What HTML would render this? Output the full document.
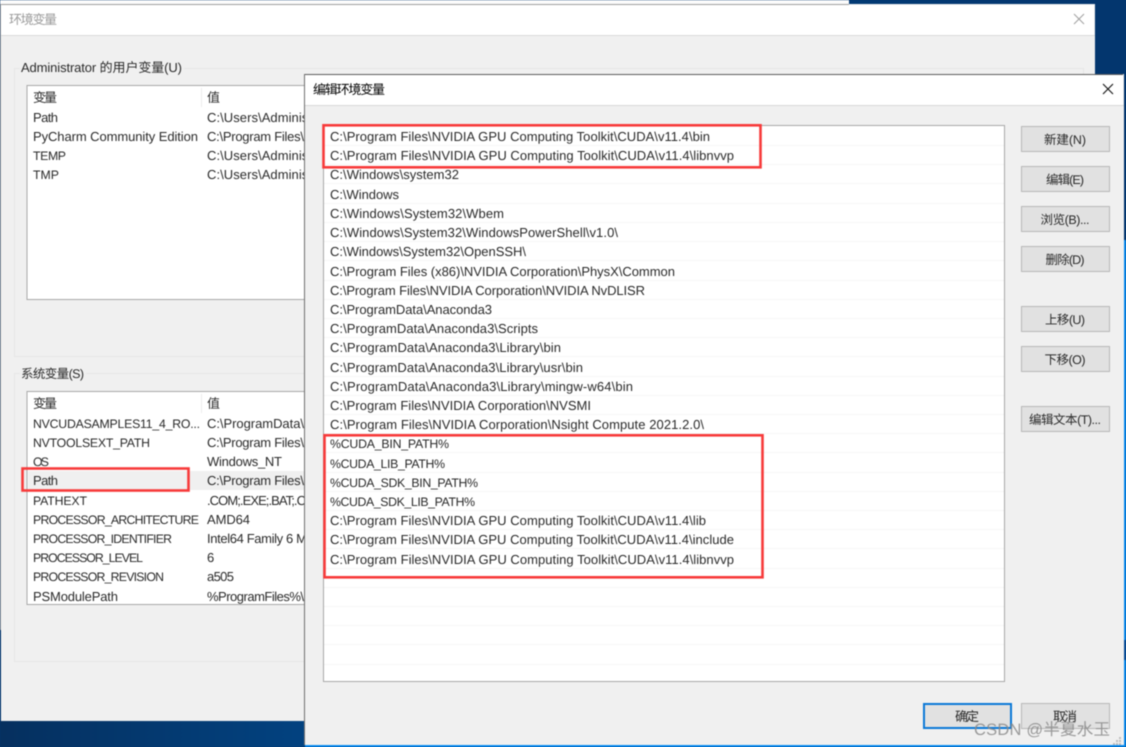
<!DOCTYPE html>
<html><head><meta charset="utf-8"><style>
html,body{margin:0;padding:0;width:1126px;height:747px;overflow:hidden;background:#04386f}
svg{display:block;position:absolute;left:0;top:0;filter:blur(.4px)}
text{font-family:"Liberation Sans","Noto Sans CJK SC",sans-serif;font-size:13px;fill:#2a2a2a;text-rendering:geometricPrecision}
.c{text-anchor:middle}
.u{font-size:12.300px}
.b{font-size:12.500px}
</style></head><body>
<svg width="1126" height="747" viewBox="0 0 1126 747" xmlns="http://www.w3.org/2000/svg">
<defs><linearGradient id="bg" x1="0" x2="1" y1="0" y2="0"><stop offset="0" stop-color="#06305f"/><stop offset=".27" stop-color="#024280"/><stop offset="1" stop-color="#03366e"/></linearGradient></defs>
<rect width="1126" height="747" fill="url(#bg)"/>
<rect x="0" y="0" width="849" height="5" fill="#fbfbfb"/>
<!-- back window -->
<rect x="0" y="4" width="1095" height="717" fill="#f0f0f0"/>
<rect x="0" y="4" width="849" height="1" fill="#a0a0a0"/>
<rect x="1" y="5" width="1093" height="30" fill="#fff"/>
<rect x="1" y="35" width="1094" height="1" fill="#dadada"/>
<rect x="0" y="5" width="1" height="625" fill="#a5a5a5"/>
<rect x="0" y="630" width="1" height="91" fill="#0b3a70"/>
<text x="9" y="24" style="fill:#9a9a9a" textLength="48">环境变量</text>
<path d="M1074 14l10 10M1084 14l-10 10" stroke="#a0a0a0" stroke-width="1" fill="none"/>
<!-- groups -->
<rect x="14.500" y="68.500" width="1069" height="288" fill="none" stroke="#e6e6e6"/>
<rect x="14.500" y="373.500" width="1069" height="288" fill="none" stroke="#e6e6e6"/>
<rect x="20" y="60" width="164" height="16" fill="#f0f0f0"/>
<rect x="20" y="366" width="66" height="16" fill="#f0f0f0"/>
<text x="21" y="72" textLength="161">Administrator 的用户变量(U)</text>
<text x="21" y="378" class="b" textLength="63">系统变量(S)</text>
<!-- user list -->
<rect x="27" y="85.500" width="290" height="214" fill="#fff" stroke="#a8a8a8"/>
<rect x="201" y="88" width="1" height="19" fill="#ececec"/>
<text x="33" y="102" textLength="24">变量</text><text x="207" y="102">值</text>
<text x="33" y="122" textLength="25">Path</text><text x="207" y="122" textLength="132">C:\Users\Administrator</text>
<text x="33" y="141" textLength="165">PyCharm Community Edition</text><text x="207" y="141" textLength="97">C:\Program Files\</text>
<text x="33" y="160" class="u" textLength="33">TEMP</text><text x="207" y="160" textLength="132">C:\Users\Administrator</text>
<text x="33" y="179" class="u" textLength="26">TMP</text><text x="207" y="179" textLength="132">C:\Users\Administrator</text>
<!-- system list -->
<rect x="27" y="391.500" width="290" height="213" fill="#fff" stroke="#a8a8a8"/>
<rect x="201" y="394" width="1" height="19" fill="#ececec"/>
<rect x="28" y="471" width="288" height="19" fill="#f0f0f0"/>
<text x="33" y="408" textLength="24">变量</text><text x="207" y="408">值</text>
<text x="33" y="428" class="u" textLength="167">NVCUDASAMPLES11_4_RO...</text><text x="207" y="428" textLength="97">C:\ProgramData\</text>
<text x="33" y="447" class="u" textLength="117">NVTOOLSEXT_PATH</text><text x="207" y="447" textLength="97">C:\Program Files\</text>
<text x="33" y="466" class="u" textLength="16">OS</text><text x="207" y="466" textLength="75">Windows_NT</text>
<text x="33" y="485" textLength="25">Path</text><text x="207" y="485" textLength="97">C:\Program Files\</text>
<text x="33" y="505" class="u" textLength="54">PATHEXT</text><text x="207" y="505" textLength="99">.COM;.EXE;.BAT;.C</text>
<text x="33" y="524" class="u" textLength="166">PROCESSOR_ARCHITECTURE</text><text x="207" y="524" textLength="43">AMD64</text>
<text x="33" y="543" class="u" textLength="139">PROCESSOR_IDENTIFIER</text><text x="207" y="543" textLength="100">Intel64 Family 6 M</text>
<text x="33" y="562" class="u" textLength="110">PROCESSOR_LEVEL</text><text x="207" y="562">6</text>
<text x="33" y="581" class="u" textLength="131">PROCESSOR_REVISION</text><text x="207" y="581" textLength="27">a505</text>
<text x="33" y="601" textLength="85">PSModulePath</text><text x="207" y="601" textLength="97">%ProgramFiles%\</text>
<rect x="22.500" y="468.500" width="166" height="22" fill="none" stroke="#f73a3a" stroke-width="2.600"/>
<!-- front dialog -->
<rect x="1124" y="240" width="2" height="507" fill="#0a8cf0"/>
<rect x="1124" y="640" width="2" height="20" fill="#0a4f9a"/>
<rect x="304" y="74" width="820" height="671" fill="#f0f0f0"/>
<rect x="304" y="74" width="819" height="1" fill="#5c5c5c"/>
<rect x="304" y="74" width="1" height="671" fill="#707070"/>
<rect x="305" y="75" width="818" height="30" fill="#fff"/>
<rect x="305" y="105" width="819" height="1" fill="#d8d8d8"/>
<rect x="305" y="745" width="821" height="2" fill="#0a8cf0"/>
<text x="313" y="94" style="fill:#000" textLength="72">编辑环境变量</text>
<path d="M1103 84l10 10M1113 84l-10 10" stroke="#111" stroke-width="1.100" fill="none"/>
<!-- path list -->
<rect x="323.500" y="125.500" width="681" height="556" fill="#fff" stroke="#a8a8a8"/>
<g fill="#f6f6f6">
<rect x="324" y="145" width="680" height="1"/><rect x="324" y="164" width="680" height="1"/><rect x="324" y="183" width="680" height="1"/><rect x="324" y="203" width="680" height="1"/><rect x="324" y="222" width="680" height="1"/><rect x="324" y="241" width="680" height="1"/><rect x="324" y="260" width="680" height="1"/><rect x="324" y="280" width="680" height="1"/><rect x="324" y="299" width="680" height="1"/><rect x="324" y="318" width="680" height="1"/><rect x="324" y="337" width="680" height="1"/><rect x="324" y="356" width="680" height="1"/><rect x="324" y="376" width="680" height="1"/><rect x="324" y="395" width="680" height="1"/><rect x="324" y="414" width="680" height="1"/><rect x="324" y="433" width="680" height="1"/><rect x="324" y="452" width="680" height="1"/><rect x="324" y="472" width="680" height="1"/><rect x="324" y="491" width="680" height="1"/><rect x="324" y="510" width="680" height="1"/><rect x="324" y="529" width="680" height="1"/><rect x="324" y="548" width="680" height="1"/><rect x="324" y="568" width="680" height="1"/><rect x="324" y="587" width="680" height="1"/><rect x="324" y="606" width="680" height="1"/><rect x="324" y="625" width="680" height="1"/><rect x="324" y="644" width="680" height="1"/><rect x="324" y="664" width="680" height="1"/>
</g>
<text x="330" y="141" textLength="380">C:\Program Files\NVIDIA GPU Computing Toolkit\CUDA\v11.4\bin</text>
<text x="330" y="160" textLength="404">C:\Program Files\NVIDIA GPU Computing Toolkit\CUDA\v11.4\libnvvp</text>
<text x="330" y="179" textLength="129">C:\Windows\system32</text>
<text x="330" y="199" textLength="69">C:\Windows</text>
<text x="330" y="218" textLength="174">C:\Windows\System32\Wbem</text>
<text x="330" y="237" textLength="288">C:\Windows\System32\WindowsPowerShell\v1.0\</text>
<text x="330" y="256" textLength="196">C:\Windows\System32\OpenSSH\</text>
<text x="330" y="276" textLength="345">C:\Program Files (x86)\NVIDIA Corporation\PhysX\Common</text>
<text x="330" y="295" textLength="315">C:\Program Files\NVIDIA Corporation\NVIDIA NvDLISR</text>
<text x="330" y="314" textLength="162">C:\ProgramData\Anaconda3</text>
<text x="330" y="333" textLength="208">C:\ProgramData\Anaconda3\Scripts</text>
<text x="330" y="352" textLength="231">C:\ProgramData\Anaconda3\Library\bin</text>
<text x="330" y="372" textLength="253">C:\ProgramData\Anaconda3\Library\usr\bin</text>
<text x="330" y="391" textLength="303">C:\ProgramData\Anaconda3\Library\mingw-w64\bin</text>
<text x="330" y="410" textLength="261">C:\Program Files\NVIDIA Corporation\NVSMI</text>
<text x="330" y="429" textLength="374">C:\Program Files\NVIDIA Corporation\Nsight Compute 2021.2.0\</text>
<text x="330" y="448" class="u" textLength="119">%CUDA_BIN_PATH%</text>
<text x="330" y="468" class="u" textLength="115">%CUDA_LIB_PATH%</text>
<text x="330" y="487" class="u" textLength="148">%CUDA_SDK_BIN_PATH%</text>
<text x="330" y="506" class="u" textLength="145">%CUDA_SDK_LIB_PATH%</text>
<text x="330" y="525" textLength="376">C:\Program Files\NVIDIA GPU Computing Toolkit\CUDA\v11.4\lib</text>
<text x="330" y="544" textLength="404">C:\Program Files\NVIDIA GPU Computing Toolkit\CUDA\v11.4\include</text>
<text x="330" y="564" textLength="404">C:\Program Files\NVIDIA GPU Computing Toolkit\CUDA\v11.4\libnvvp</text>
<rect x="323.500" y="125.300" width="437" height="42" fill="none" stroke="#f73a3a" stroke-width="2.600"/>
<rect x="324.500" y="435.300" width="438" height="142" fill="none" stroke="#f73a3a" stroke-width="2.600"/>
<!-- buttons -->
<g fill="#e1e1e1" stroke="#b8b8b8">
<rect x="1021.500" y="126.500" width="88" height="25"/><rect x="1021.500" y="166.500" width="88" height="25"/><rect x="1021.500" y="206.500" width="88" height="25"/><rect x="1021.500" y="246.500" width="88" height="25"/><rect x="1021.500" y="306.500" width="88" height="25"/><rect x="1021.500" y="346.500" width="88" height="25"/><rect x="1021.500" y="406.500" width="88" height="25"/><rect x="1021.500" y="703.500" width="88" height="25"/>
<rect x="924" y="704" width="87" height="24" stroke="#0a78d7" stroke-width="2"/>
</g>
<text class="c b" x="1065" y="144" textLength="42">新建(N)</text>
<text class="c b" x="1065" y="184" textLength="38">编辑(E)</text>
<text class="c b" x="1065" y="224" textLength="49">浏览(B)...</text>
<text class="c b" x="1065" y="264" textLength="39">删除(D)</text>
<text class="c b" x="1065" y="324" textLength="40">上移(U)</text>
<text class="c b" x="1065" y="364" textLength="41">下移(O)</text>
<text class="c b" x="1065" y="424" textLength="72">编辑文本(T)...</text>
<text class="c" x="967" y="721" textLength="24">确定</text>
<text class="c" x="1065" y="721" textLength="24">取消</text>
<text x="974" y="735" style="fill:#8a8a8a;font-size:16.500px;fill-opacity:.85" textLength="136">CSDN @半夏水玉</text>
<g fill="#bdbdbd"><rect x="1119" y="737" width="2" height="2"/><rect x="1116" y="740" width="2" height="2"/><rect x="1119" y="740" width="2" height="2"/><rect x="1113" y="743" width="2" height="2"/><rect x="1116" y="743" width="2" height="2"/><rect x="1119" y="743" width="2" height="2"/></g>
</svg>
</body></html>
